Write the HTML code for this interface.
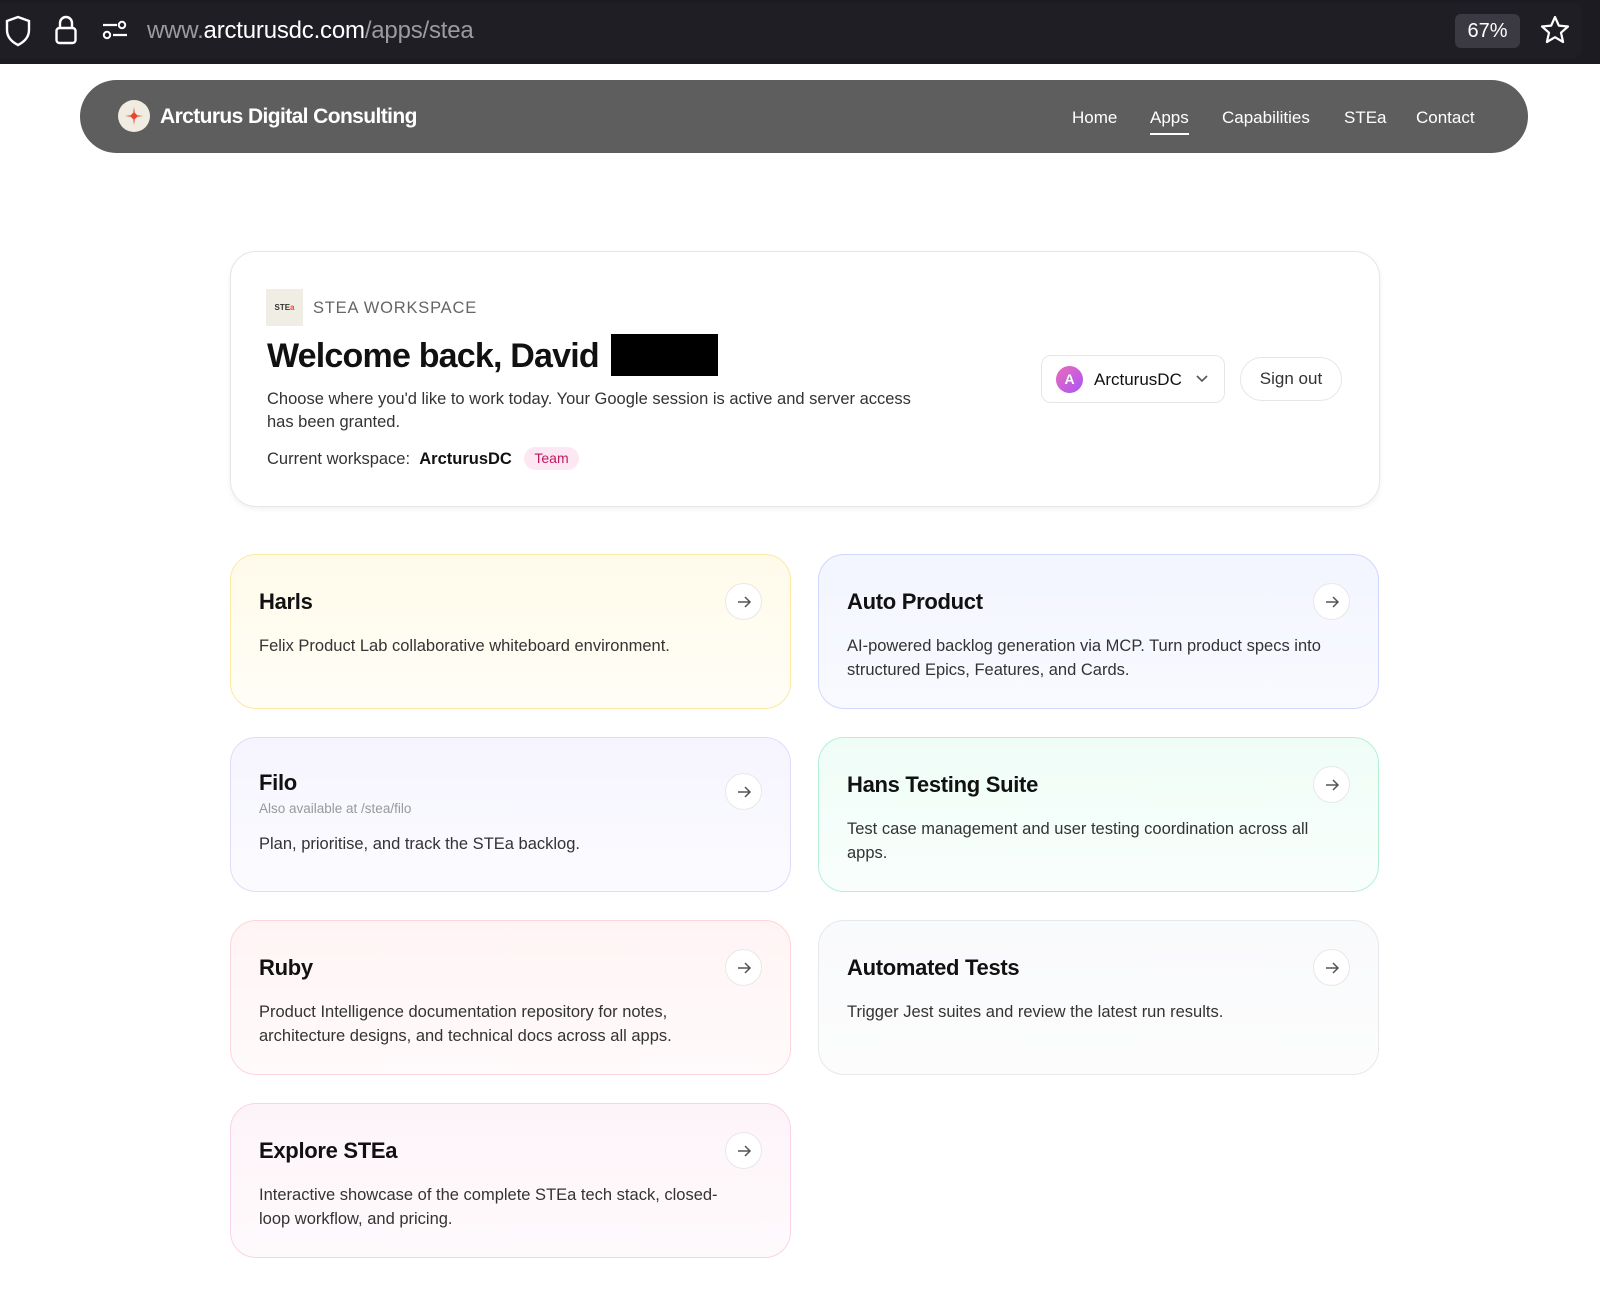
<!DOCTYPE html>
<html><head><meta charset="utf-8">
<style>
*{box-sizing:border-box;margin:0;padding:0}
body{width:1600px;height:1309px;background:#fff;font-family:"Liberation Sans",Arial,sans-serif;position:relative;overflow:hidden;color:#111}
.abs{position:absolute}
.bar{left:0;top:0;width:1600px;height:64px;background:#1c1b21}
.barin{left:0;top:3px;width:1582px;height:55px;background:#1f1e25;border-radius:0 8px 8px 0}
.url{left:147px;top:17px;font-size:24px;color:#9a9aa0;letter-spacing:-0.2px}
.url b{color:#fff;font-weight:normal}
.zoomb{left:1455px;top:14px;width:65px;height:34px;background:#3b3a42;border-radius:6px;color:#fff;font-size:20px;text-align:center;line-height:34px}
.nav{left:80px;top:80px;width:1448px;height:73px;background:#5e5e5e;border-radius:37px}
.logo{left:118px;top:100px;width:32px;height:32px;border-radius:50%;background:#f1ece2}
.brand{left:160px;top:105px;font-size:21px;font-weight:bold;color:#fff;letter-spacing:-0.6px}
.nl{top:108px;font-size:17px;color:#fff}
.wc{left:230px;top:251px;width:1150px;height:256px;border:1px solid #e6e6e6;border-radius:26px;box-shadow:0 2px 6px rgba(0,0,0,.06)}
.card{position:absolute;width:561px;height:155px;border-radius:26px;border:1.5px solid}
.card h3{position:absolute;left:28px;top:34px;font-size:22px;font-weight:bold;color:#111;letter-spacing:-0.3px}
.card p{position:absolute;left:28px;top:80px;width:480px;font-size:16.5px;line-height:23.5px;color:#333}
.arr{position:absolute;right:28px;top:28px;width:37px;height:37px;border-radius:50%;background:#fff;border:1px solid #e8e8e8}
.arr svg{position:absolute;left:10px;top:10px}
</style></head><body>
<div class="abs bar"></div>
<div class="abs barin"></div>
<svg class="abs" style="left:4px;top:15px" width="28" height="32" viewBox="0 0 28 32"><path d="M14 2 L25 6 V15 C25 22 20 27 14 30 C8 27 3 22 3 15 V6 Z" fill="none" stroke="#fff" stroke-width="2.4"/></svg>
<svg class="abs" style="left:53px;top:14px" width="26" height="32" viewBox="0 0 26 32"><path d="M7 14 V9 A6 6 0 0 1 19 9 V14" fill="none" stroke="#fff" stroke-width="2.4"/><rect x="3.5" y="14" width="19" height="15" rx="3" fill="none" stroke="#fff" stroke-width="2.4"/></svg>
<svg class="abs" style="left:101px;top:19px" width="28" height="22" viewBox="0 0 28 22"><path d="M2 6 H16 M12 16 H26" stroke="#fff" stroke-width="2.2"/><circle cx="21" cy="6" r="3.2" fill="none" stroke="#fff" stroke-width="2"/><circle cx="6" cy="16" r="3.2" fill="none" stroke="#fff" stroke-width="2"/></svg>
<div class="abs url">www.<b>arcturusdc.com</b>/apps/stea</div>
<div class="abs zoomb">67%</div>
<svg class="abs" style="left:1540px;top:15px" width="30" height="30" viewBox="0 0 30 30"><path d="M15 2 L18.8 10.6 L28 11.5 L21 17.7 L23.1 27 L15 22.2 L6.9 27 L9 17.7 L2 11.5 L11.2 10.6 Z" fill="none" stroke="#fff" stroke-width="2.2" stroke-linejoin="round"/></svg>

<div class="abs nav"></div>
<div class="abs logo"></div>
<svg class="abs" style="left:118px;top:100px" width="32" height="32" viewBox="0 0 32 32"><path d="M16 7 L17 15 L25 16 L17 17 L16 25 L15 17 L7 16 L15 15 Z" fill="#e8452c"/><circle cx="16" cy="16" r="3" fill="#e8452c"/></svg>
<div class="abs brand">Arcturus Digital Consulting</div>
<div class="abs nl" style="left:1072px">Home</div>
<div class="abs nl" style="left:1150px">Apps</div>
<div class="abs" style="left:1150px;top:133px;width:39px;height:2px;background:#fff"></div>
<div class="abs nl" style="left:1222px">Capabilities</div>
<div class="abs nl" style="left:1344px">STEa</div>
<div class="abs nl" style="left:1416px">Contact</div>

<div class="abs wc"></div>
<div class="abs" style="left:266px;top:289px;width:37px;height:37px;background:#f0ede5;font-size:8px;font-weight:bold;line-height:37px;text-align:center;color:#333">STE<span style="color:#e8452c">a</span></div>
<div class="abs" style="left:313px;top:299px;font-size:16.5px;color:#666;letter-spacing:0.8px">STEA WORKSPACE</div>
<div class="abs" style="left:267px;top:337px;font-size:34px;font-weight:bold;letter-spacing:-0.8px;color:#111">Welcome back, David</div>
<div class="abs" style="left:611px;top:334px;width:107px;height:42px;background:#000"></div>
<div class="abs" style="left:267px;top:388px;width:660px;font-size:16.5px;line-height:23px;color:#333">Choose where you'd like to work today. Your Google session is active and server access has been granted.</div>
<div class="abs" style="left:267px;top:450px;font-size:16.5px;color:#333">Current workspace:&nbsp; <b style="color:#111">ArcturusDC</b></div>
<div class="abs" style="left:524px;top:447px;width:55px;height:23px;border-radius:12px;background:#fce7f3;color:#be185d;font-size:14px;text-align:center;line-height:23px">Team</div>

<div class="abs" style="left:1041px;top:355px;width:184px;height:48px;border:1px solid #e6e6e6;border-radius:10px;background:#fff"></div>
<div class="abs" style="left:1056px;top:366px;width:27px;height:27px;border-radius:50%;background:linear-gradient(135deg,#ec6cb9,#a855f7);color:#fff;font-size:14px;font-weight:bold;text-align:center;line-height:27px">A</div>
<div class="abs" style="left:1094px;top:370px;font-size:17px;color:#111">ArcturusDC</div>
<svg class="abs" style="left:1195px;top:374px" width="14" height="10" viewBox="0 0 14 10"><path d="M2 2 L7 7 L12 2" fill="none" stroke="#555" stroke-width="1.6"/></svg>
<div class="abs" style="left:1240px;top:357px;width:102px;height:44px;border:1px solid #e6e6e6;border-radius:22px;background:#fff;font-size:17px;color:#333;text-align:center;line-height:42px">Sign out</div>

<div class="card" style="left:230px;top:554px;border-color:#fde9a0;background:linear-gradient(#fffbeb,#fffdf6)"><h3>Harls</h3><p>Felix Product Lab collaborative whiteboard environment.</p><div class="arr"><svg width="16" height="16" viewBox="0 0 16 16"><path d="M2 8 H14 M9 3 L14 8 L9 13" fill="none" stroke="#555" stroke-width="1.5"/></svg></div></div>
<div class="card" style="left:818px;top:554px;border-color:#cfd8fc;background:linear-gradient(#f3f5ff,#f9faff)"><h3>Auto Product</h3><p style="width:500px">AI-powered backlog generation via MCP. Turn product specs into structured Epics, Features, and Cards.</p><div class="arr"><svg width="16" height="16" viewBox="0 0 16 16"><path d="M2 8 H14 M9 3 L14 8 L9 13" fill="none" stroke="#555" stroke-width="1.5"/></svg></div></div>
<div class="card" style="left:230px;top:737px;border-color:#e0dbfb;background:linear-gradient(#f6f5ff,#fbfbff)"><h3 style="top:32px">Filo</h3><div style="position:absolute;left:28px;top:63px;font-size:13.5px;color:#999">Also available at /stea/filo</div><p style="top:95px">Plan, prioritise, and track the STEa backlog.</p><div class="arr" style="top:35px"><svg width="16" height="16" viewBox="0 0 16 16"><path d="M2 8 H14 M9 3 L14 8 L9 13" fill="none" stroke="#555" stroke-width="1.5"/></svg></div></div>
<div class="card" style="left:818px;top:737px;border-color:#b5f0d6;background:linear-gradient(#effdf7,#f9fefc)"><h3>Hans Testing Suite</h3><p style="width:475px">Test case management and user testing coordination across all apps.</p><div class="arr"><svg width="16" height="16" viewBox="0 0 16 16"><path d="M2 8 H14 M9 3 L14 8 L9 13" fill="none" stroke="#555" stroke-width="1.5"/></svg></div></div>
<div class="card" style="left:230px;top:920px;border-color:#fdd5dc;background:linear-gradient(#fff4f5,#fffafb)"><h3>Ruby</h3><p style="width:460px">Product Intelligence documentation repository for notes, architecture designs, and technical docs across all apps.</p><div class="arr"><svg width="16" height="16" viewBox="0 0 16 16"><path d="M2 8 H14 M9 3 L14 8 L9 13" fill="none" stroke="#555" stroke-width="1.5"/></svg></div></div>
<div class="card" style="left:818px;top:920px;border-color:#e6e8ec;background:linear-gradient(#f9fafb,#fcfcfd)"><h3>Automated Tests</h3><p>Trigger Jest suites and review the latest run results.</p><div class="arr"><svg width="16" height="16" viewBox="0 0 16 16"><path d="M2 8 H14 M9 3 L14 8 L9 13" fill="none" stroke="#555" stroke-width="1.5"/></svg></div></div>
<div class="card" style="left:230px;top:1103px;border-color:#fad3e8;background:linear-gradient(#fdf4f9,#fefafc)"><h3>Explore STEa</h3><p style="width:475px">Interactive showcase of the complete STEa tech stack, closed-&#8203;loop workflow, and pricing.</p><div class="arr"><svg width="16" height="16" viewBox="0 0 16 16"><path d="M2 8 H14 M9 3 L14 8 L9 13" fill="none" stroke="#555" stroke-width="1.5"/></svg></div></div>
</body></html>
